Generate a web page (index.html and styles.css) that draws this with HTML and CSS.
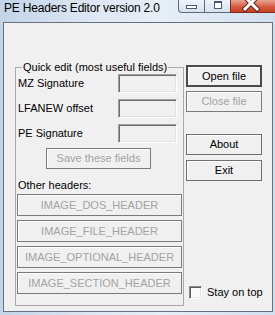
FILE: index.html
```html
<!DOCTYPE html>
<html lang="en">
<head>
  <meta charset="UTF-8">
  <title>PE Headers Editor version 2.0</title>
  <link rel="stylesheet" href="styles.css">
</head>
<body>
  <div class="titlebar">
    <span class="title">PE Headers Editor version 2.0</span>
    <div class="caption">
      <span class="cap-btn cap-min"><i></i></span>
      <span class="cap-btn cap-max"><i></i></span>
      <span class="cap-btn cap-close">
        <svg width="18" height="12" viewBox="0 0 18 12">
          <path d="M3 -3 L15 9 M15 -3 L3 9" stroke="#5e2418" stroke-width="5" stroke-linecap="square"/>
          <path d="M3 -3 L15 9 M15 -3 L3 9" stroke="#ffffff" stroke-width="3" stroke-linecap="square"/>
        </svg>
      </span>
    </div>
  </div>

  <div class="client">
    <fieldset class="quick">
      <legend>Quick edit (most useful fields)</legend>
      <div class="row"><span>MZ Signature</span><input class="field" disabled></div>
      <div class="row"><span>LFANEW offset</span><input class="field" disabled></div>
      <div class="row"><span>PE Signature</span><input class="field" disabled></div>
      <button class="btn save" disabled>Save these fields</button>
      <p class="other">Other headers:</p>
      <button class="btn hdr" disabled>IMAGE_DOS_HEADER</button>
      <button class="btn hdr" disabled>IMAGE_FILE_HEADER</button>
      <button class="btn hdr" disabled>IMAGE_OPTIONAL_HEADER</button>
      <button class="btn hdr" disabled>IMAGE_SECTION_HEADER</button>
    </fieldset>

    <div class="side">
      <button class="btn default">Open file</button>
      <button class="btn close" disabled>Close file</button>
      <button class="btn about">About</button>
      <button class="btn exit">Exit</button>
      <label class="check"><span class="box"></span>Stay on top</label>
    </div>
  </div>
</body>
</html>
```

FILE: styles.css
```css
body {
  margin: 0;
  width: 275px;
  height: 315px;
  overflow: hidden;
  font-family: "Liberation Sans", Arial, sans-serif;
  background: linear-gradient(to right, #c3d4e8 0%, #dfe8f3 35%, #e6eef7 60%, #d2dfee 100%);
}

/* title bar */
.titlebar {
  display: flex;
  height: 22px;
}

.title {
  padding: 1px 0 0 4px;
  font-size: 12px;
  line-height: 15px;
  letter-spacing: -0.2px;
  color: #000;
}

.caption {
  display: flex;
  margin-left: auto;
  margin-right: -1px;
  height: 13px;
  flex-shrink: 0;
}

.cap-btn {
  display: flex;
  justify-content: center;
  height: 12px;
  border: 1px solid #5a6a80;
  border-top: none;
  background: linear-gradient(to bottom, #eef3f9, #d6e1ee);
}

.cap-min {
  width: 25px;
  border-right: none;
  border-radius: 0 0 0 4px;
}

.cap-max {
  width: 25px;
  border-right: none;
}

.cap-close {
  width: 44px;
  background: linear-gradient(to bottom, #e9a594, #d4583c 60%, #c63f25);
  border-color: #7a2d20;
}

.cap-min i {
  width: 9px;
  height: 2px;
  margin-top: 5px;
  border: 1px solid #4a5a70;
  background: #fff;
}

.cap-max i {
  width: 6px;
  height: 5px;
  margin-top: 1px;
  border: 1px solid #4a5a70;
  border-top-width: 2px;
  background: #fff;
}

.cap-close svg {
  margin-right: 4px;
}

/* client area */
.client {
  display: flex;
  align-items: flex-start;
  box-sizing: border-box;
  width: 270px;
  height: 290px;
  margin-left: 3px;
  border: 1px solid #66727f;
  background-color: #f0f0f0;
  font-size: 11px;
  line-height: 13px;
  color: #000;
}

.quick {
  box-sizing: border-box;
  width: 169px;
  margin: 38px 0 0 11px;
  padding: 0 1px 11px 1px;
  border: 1px solid #a9a9a9;
  min-width: 0;
}

.quick legend {
  margin-left: 5px;
  padding: 0 1px;
  line-height: 13px;
}

.row {
  display: flex;
  align-items: center;
  justify-content: space-between;
  height: 19px;
  padding-left: 1px;
}

.row + .row {
  margin-top: 6px;
}

.field {
  box-sizing: border-box;
  width: 59px;
  height: 19px;
  margin: 0 5px 0 0;
  padding: 0;
  border: 1px solid;
  border-color: #a0a0a0 #ffffff #ffffff #a0a0a0;
  box-shadow: inset 1px 1px 0 #6d6d6d, inset -1px -1px 0 #e3e3e3;
  background-color: #f0f0f0;
}

.btn {
  display: block;
  box-sizing: border-box;
  padding: 0;
  font-family: "Liberation Sans", Arial, sans-serif;
  font-size: 11px;
  line-height: 13px;
  color: #000;
  background-color: #f0f0f0;
  border: 1px solid #6f6f6f;
  box-shadow: inset 1px 1px 0 #ffffff;
}

.btn:disabled {
  color: #a3a3a3;
  border-color: #7a7a7a;
}

.save {
  width: 105px;
  height: 21px;
  margin: 5px 0 0 29px;
}

.other {
  margin: 10px 0 0 1px;
}

.hdr {
  width: 165px;
  height: 22px;
  margin-top: 4px;
}

.other + .hdr {
  margin-top: 2px;
}

/* right column */
.side {
  display: flex;
  flex-direction: column;
  width: 76px;
  margin: 42px 0 0 2px;
}

.side .btn {
  width: 76px;
  height: 21px;
}

.side .default {
  height: 22px;
  border: 2px solid #4a4a4a;
}

.side .close {
  margin-top: 4px;
}

.side .about {
  margin-top: 22px;
}

.side .exit {
  margin-top: 5px;
}

.check {
  display: flex;
  align-items: center;
  gap: 5px;
  margin: 104px 0 0 3px;
  height: 15px;
  white-space: nowrap;
}

.box {
  flex-shrink: 0;
  box-sizing: border-box;
  width: 13px;
  height: 13px;
  border: 1px solid;
  border-color: #8a8a8a #ffffff #ffffff #8a8a8a;
  box-shadow: inset 1px 1px 0 #5a5a5a, inset -1px -1px 0 #e3e3e3;
  background-color: #fafafa;
}
```
